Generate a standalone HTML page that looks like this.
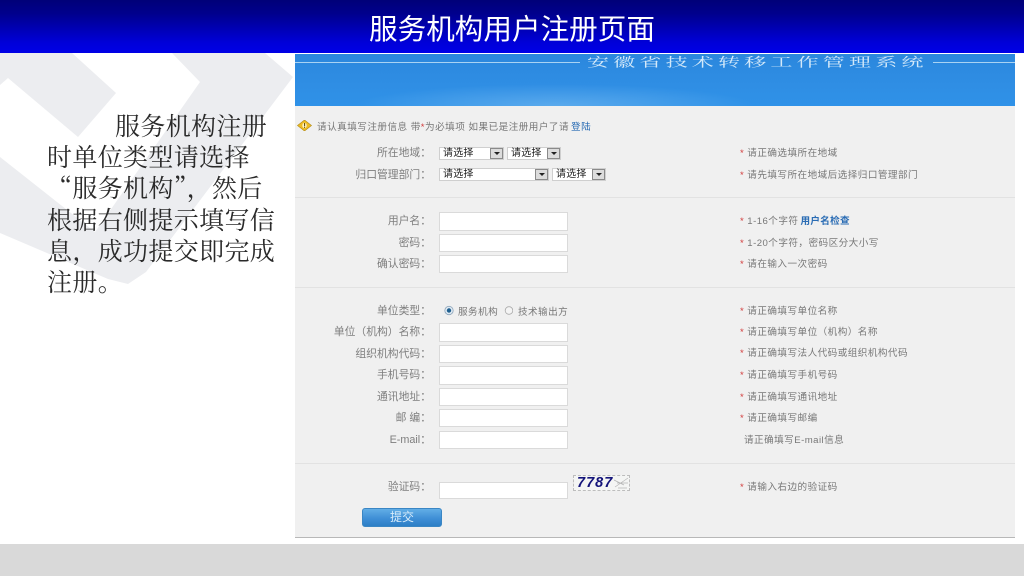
<!DOCTYPE html>
<html lang="zh">
<head>
<meta charset="utf-8">
<title>服务机构用户注册页面</title>
<style>
html,body{margin:0;padding:0;background:#fff}
#s{position:relative;width:1024px;height:576px;overflow:hidden;background:#fff;font-family:"Liberation Sans","Noto Sans CJK SC",sans-serif}
#s div,#s span.a,#s a{position:absolute}
.bar{left:0;top:0;width:1024px;height:53px;background:linear-gradient(#000078 0,#00008c 25%,#0000d8 80%,#0000e6 100%)}
.title{left:369px;top:7px;width:300px;font-size:28.6px;line-height:42px;color:#fff;white-space:nowrap;font-family:"Noto Sans CJK SC",sans-serif;font-weight:400}
.t{left:47px;font-size:25px;letter-spacing:.35px;line-height:31px;height:31px;color:#2a2a2a;white-space:nowrap;font-family:"Noto Serif CJK SC",serif}
#f{left:0;top:0;width:1024px;height:576px;filter:blur(.35px)}
.panel{left:295px;top:106px;width:720px;height:431px;background:#f0f0f0}
.banner{left:295px;top:54px;width:720px;height:52px;overflow:hidden;background:linear-gradient(#2b87dd,#2f8ee4 60%,#2f92e8)}
.cloud{left:60px;top:30px;width:400px;height:44px;border-radius:50%;background:radial-gradient(closest-side,rgba(190,225,248,.3),rgba(190,225,248,0))}
.bl{height:1px;top:8px;background:#a9d3f3}
.bt{left:292px;top:-2px;font-size:22px;line-height:20px;letter-spacing:4.2px;color:#d4e9f9;white-space:nowrap;transform:scaleY(.56);font-family:"Noto Serif CJK SC",serif}
.hr{left:295px;width:720px;height:1px;background:#e2e2e2}
.l{right:593px;margin-top:1px;font-size:10.8px;line-height:14px;color:#7e7e7e;white-space:nowrap}
.h{left:740px;margin-top:1px;font-size:9.6px;letter-spacing:.45px;line-height:14px;color:#777;white-space:nowrap}
.h b{color:#d23c3c;font-weight:400}
.h a,.m a{position:static;color:#2a6cb4;margin-left:2px}
.h a{font-weight:700;letter-spacing:.3px}
.m{left:317px;top:121px;font-size:9.6px;letter-spacing:.47px;line-height:14px;color:#777;white-space:nowrap}
.m b{color:#d23c3c;font-weight:400}
.i{left:439px;width:127px;background:#fff;border:1px solid #dadada;box-sizing:content-box}
.sel{background:#fff;height:13px;border:1px solid #cfcfcf;box-sizing:border-box;font-size:10px;line-height:12px;color:#222;padding-left:3px;white-space:nowrap;letter-spacing:.2px}
.ar{top:0;right:0;width:13px;height:11px;background:#dcdcdc;border:1px solid #8a8a8a;box-sizing:border-box}
.ar:after{content:"";position:absolute;left:3px;top:3px;border:3px solid transparent;border-top:3px solid #222;border-bottom:0}
.btn{left:362px;top:508px;width:80px;height:19px;border-radius:3px;background:linear-gradient(#62aee6,#3f8fd6 55%,#2d7fc6);color:#d8ecfa;font-size:12px;line-height:17px;text-align:center;box-sizing:border-box;border:1px solid #3a86c4}
.cap{left:573px;top:475px;width:57px;height:16px;background:#f4f5f4;border:1px dashed #bdbdbd;box-sizing:border-box;overflow:hidden}
.capt{left:3px;top:-1px;font:italic bold 14.5px/16px "Liberation Sans",sans-serif;letter-spacing:1px;color:#14147a}
.foot{left:0;top:544px;width:1024px;height:32px;background:#d9d9d9}
.baseline{left:295px;top:537px;width:720px;height:1px;background:#b8b8b8}
</style>
</head>
<body>
<div id="s">
<svg style="position:absolute;left:0;top:53px" width="295" height="300" viewBox="0 53 295 300">
<polygon fill="#ecedf0" points="0,53 72,53 116,93 78,137 8,78 0,85"/>
<polygon fill="#ecedf0" points="172,53 265,53 293,77 146,272 128,284 108,279 0,233 0,157 95,232 200,82"/>
</svg>
<div class="bar"></div>
<div class="title">服务机构用户注册页面</div>
<div class="t" style="left:115px;top:110px">服务机构注册</div>
<div class="t" style="top:141px">时单位类型请选择</div>
<div class="t" style="top:172px">“服务机构”，然后</div>
<div class="t" style="top:204px">根据右侧提示填写信</div>
<div class="t" style="top:235px">息，成功提交即完成</div>
<div class="t" style="top:266px">注册。</div>

<div id="f">
<div class="banner">
  <div class="cloud"></div>
  <div class="bl" style="left:0;width:285px"></div>
  <div class="bl" style="left:638px;width:82px"></div>
  <div class="bt">安徽省技术转移工作管理系统</div>
</div>
<div class="panel"></div>
<div class="hr" style="top:197px"></div>
<div class="hr" style="top:287px"></div>
<div class="hr" style="top:463px"></div>
<div class="baseline"></div>

<svg style="position:absolute;left:297px;top:120px" width="15" height="11" viewBox="0 0 15 11"><polygon points="7.5,0 14.5,5.5 7.5,11 .5,5.5" fill="#eebc22" stroke="#b08a18" stroke-width=".6"/><ellipse cx="7.5" cy="5.5" rx="2.2" ry="2.6" fill="#fff3c0"/><rect x="7" y="3" width="1.1" height="3.2" fill="#6a5210"/><rect x="7" y="6.8" width="1.1" height="1.1" fill="#6a5210"/></svg>
<div class="m">请认真填写注册信息 带<b>*</b>为必填项 如果已是注册用户了请 <a>登陆</a></div>

<div class="l" style="top:145px">所在地域：</div>
<div class="sel" style="left:439px;top:147px;width:65px">请选择<div class="ar"></div></div>
<div class="sel" style="left:507px;top:147px;width:54px">请选择<div class="ar"></div></div>
<div class="l" style="top:167px">归口管理部门：</div>
<div class="sel" style="left:439px;top:168px;width:110px">请选择<div class="ar"></div></div>
<div class="sel" style="left:552px;top:168px;width:54px">请选择<div class="ar"></div></div>
<div class="h" style="top:146px"><b>*</b> 请正确选填所在地域</div>
<div class="h" style="top:168px"><b>*</b> 请先填写所在地域后选择归口管理部门</div>

<div class="l" style="top:213px">用户名：</div>
<div class="i" style="top:212px;height:17px"></div>
<div class="h" style="top:214px"><b>*</b> 1-16个字符 <a>用户名检查</a></div>
<div class="l" style="top:235px">密码：</div>
<div class="i" style="top:234px;height:16px"></div>
<div class="h" style="top:236px"><b>*</b> 1-20个字符，密码区分大小写</div>
<div class="l" style="top:256px">确认密码：</div>
<div class="i" style="top:255px;height:16px"></div>
<div class="h" style="top:257px"><b>*</b> 请在输入一次密码</div>

<div class="l" style="top:303px">单位类型：</div>
<svg style="position:absolute;left:443px;top:305px" width="70" height="11" viewBox="0 0 70 11"><circle cx="6" cy="5.5" r="4.2" fill="#dfe9f2" stroke="#8fa6bb" stroke-width=".8"/><circle cx="6" cy="5.5" r="2.2" fill="#1f5f8f"/><circle cx="66" cy="5.5" r="3.8" fill="#f4f4f4" stroke="#aaa" stroke-width=".8"/></svg>
<div class="h" style="left:458px;top:305px;color:#777">服务机构</div>
<div class="h" style="left:518px;top:305px;color:#777">技术输出方</div>
<div class="h" style="top:304px"><b>*</b> 请正确填写单位名称</div>

<div class="l" style="top:324px">单位（机构）名称：</div>
<div class="i" style="top:323px;height:17px"></div>
<div class="h" style="top:325px"><b>*</b> 请正确填写单位（机构）名称</div>
<div class="l" style="top:346px">组织机构代码：</div>
<div class="i" style="top:345px;height:16px"></div>
<div class="h" style="top:346px"><b>*</b> 请正确填写法人代码或组织机构代码</div>
<div class="l" style="top:367px">手机号码：</div>
<div class="i" style="top:366px;height:17px"></div>
<div class="h" style="top:368px"><b>*</b> 请正确填写手机号码</div>
<div class="l" style="top:389px">通讯地址：</div>
<div class="i" style="top:388px;height:16px"></div>
<div class="h" style="top:390px"><b>*</b> 请正确填写通讯地址</div>
<div class="l" style="top:410px">邮 编：</div>
<div class="i" style="top:409px;height:16px"></div>
<div class="h" style="top:411px"><b>*</b> 请正确填写邮编</div>
<div class="l" style="top:432px">E-mail：</div>
<div class="i" style="top:431px;height:16px"></div>
<div class="h" style="left:744px;top:433px">请正确填写E-mail信息</div>

<div class="l" style="top:479px">验证码：</div>
<div class="i" style="top:482px;height:15px"></div>
<div class="cap">
  <svg style="position:absolute;left:0;top:0" width="55" height="14" viewBox="0 0 55 14"><path d="M41 11 L54 2 M43 7 H54 M44 12 H53 M40 4 L50 9" stroke="#b5b5b5" stroke-width=".7" fill="none"/></svg>
  <div class="capt">7787</div>
</div>
<div class="h" style="top:480px"><b>*</b> 请输入右边的验证码</div>
<div class="btn">提交</div>
</div>
<div class="foot"></div>
</div>
</body>
</html>
